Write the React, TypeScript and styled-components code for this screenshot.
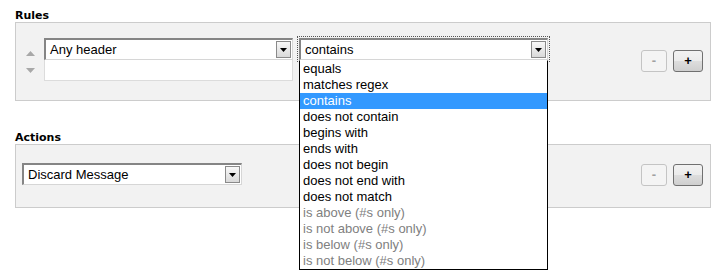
import * as React from 'react';
import styled, { createGlobalStyle } from 'styled-components';

const GlobalStyle = createGlobalStyle`
  body {
    margin: 0;
    background: #ffffff;
    font-family: "Liberation Sans", Arial, sans-serif;
  }
`;

const operators = [
  { label: 'equals' },
  { label: 'matches regex' },
  { label: 'contains', selected: true },
  { label: 'does not contain' },
  { label: 'begins with' },
  { label: 'ends with' },
  { label: 'does not begin' },
  { label: 'does not end with' },
  { label: 'does not match' },
  { label: 'is above (#s only)', disabled: true },
  { label: 'is not above (#s only)', disabled: true },
  { label: 'is below (#s only)', disabled: true },
  { label: 'is not below (#s only)', disabled: true },
];

const DropButton = () => (
  <Drop>
    <svg width="7" height="4" viewBox="0 0 7 4">
      <path d="M0 0h7L3.5 4z" fill="#000" />
    </svg>
  </Drop>
);

const Arrow: React.FC<{ down?: boolean }> = ({ down }) => (
  <svg width="9" height="5" viewBox="0 0 9 5">
    <path d={down ? 'M0 0h9L4.5 5z' : 'M4.5 0L9 5H0z'} fill="#a8a8a8" />
  </svg>
);

const App: React.FC = () => (
  <Page>
    <GlobalStyle />
    <Title>Rules</Title>
    <RulesPanel>
      <Arrows>
        <Arrow />
        <Arrow down />
      </Arrows>
      <Fields>
        <Select width={249}>
          <span>Any header</span>
          <DropButton />
        </Select>
        <TextInput />
      </Fields>
      <OperatorWrap>
        <Select width={249} focused>
          <span>contains</span>
          <DropButton />
        </Select>
        <List>
          {operators.map((op) => (
            <Option key={op.label} selected={op.selected} disabled={op.disabled}>
              {op.label}
            </Option>
          ))}
        </List>
      </OperatorWrap>
      <Buttons offset={12}>
        <SmallButton disabled>-</SmallButton>
        <SmallButton primary>+</SmallButton>
      </Buttons>
    </RulesPanel>

    <Title spaced>Actions</Title>
    <ActionsPanel>
      <Select width={220}>
        <span>Discard Message</span>
        <DropButton />
      </Select>
      <Buttons offset={1}>
        <SmallButton disabled>-</SmallButton>
        <SmallButton primary>+</SmallButton>
      </Buttons>
    </ActionsPanel>
  </Page>
);

export default App;

const Page = styled.div`
  padding: 9px 0 0 15px;
  width: 722px;
  height: 273px;
  box-sizing: border-box;
  overflow: hidden;
`;

const Title = styled.div<{ spaced?: boolean }>`
  font-family: "DejaVu Sans", Verdana, sans-serif;
  font-size: 11px;
  font-weight: bold;
  line-height: 13px;
  color: #000;
  margin-top: ${(p) => (p.spaced ? '30px' : '0')};
`;

const Panel = styled.div`
  width: 696px;
  box-sizing: border-box;
  border: 1px solid #cccccc;
  background: #f2f2f2;
  display: flex;
  align-items: flex-start;
`;

const RulesPanel = styled(Panel)`
  height: 79px;
  padding: 15px 7px 0 0;
`;

const ActionsPanel = styled(Panel)`
  height: 64px;
  padding: 18px 7px 0 6px;
`;

const Arrows = styled.div`
  width: 28px;
  display: flex;
  flex-direction: column;
  align-items: center;
  gap: 12px;
  padding-top: 13px;
`;

const Fields = styled.div`
  display: flex;
  flex-direction: column;
`;

const Select = styled.div<{ width: number; focused?: boolean }>`
  width: ${(p) => p.width}px;
  height: 22px;
  box-sizing: border-box;
  background: #fff;
  border-top: 2px solid #858585;
  border-left: 2px solid #858585;
  border-right: 1px solid #d6d6d6;
  border-bottom: 1px solid #d6d6d6;
  display: flex;
  align-items: center;
  justify-content: space-between;
  padding: 0 1px 0 4px;
  font-size: 13px;
  color: #000;
  outline: ${(p) => (p.focused ? '1px dotted #555' : 'none')};
  outline-offset: 1px;
`;

const Drop = styled.span`
  width: 15px;
  height: 17px;
  box-sizing: border-box;
  border: 1px solid #8a8a8a;
  background: linear-gradient(#f8f8f8, #d9d9d9);
  display: flex;
  align-items: center;
  justify-content: center;
`;

const TextInput = styled.div`
  width: 249px;
  height: 21px;
  box-sizing: border-box;
  background: #fff;
  border: 1px solid #dcdcdc;
  border-top: none;
`;

const OperatorWrap = styled.div`
  position: relative;
  margin-left: 6px;
`;

const List = styled.div`
  position: absolute;
  top: 22px;
  left: 0;
  width: 249px;
  box-sizing: border-box;
  background: #fff;
  border: 1px solid #000;
  border-top: 1px solid #fff;
  z-index: 2;
`;

const Option = styled.div<{ selected?: boolean; disabled?: boolean }>`
  height: 16px;
  line-height: 16px;
  padding-left: 3px;
  font-size: 13px;
  white-space: nowrap;
  background: ${(p) => (p.selected ? '#3399ff' : 'transparent')};
  color: ${(p) => (p.selected ? '#fff' : p.disabled ? '#808080' : '#000')};
`;

const Buttons = styled.div<{ offset: number }>`
  margin-left: auto;
  margin-top: ${(p) => p.offset}px;
  display: flex;
  gap: 6px;
`;

const SmallButton = styled.button<{ primary?: boolean }>`
  height: 22px;
  width: ${(p) => (p.primary ? '30px' : '26px')};
  padding: 0;
  border-radius: 3px;
  font-family: "Liberation Sans", Arial, sans-serif;
  font-size: 13px;
  font-weight: bold;
  line-height: 18px;
  border: 1px solid ${(p) => (p.primary ? '#707070' : '#c4c4c4')};
  color: ${(p) => (p.primary ? '#000' : '#a0a0a0')};
  background: ${(p) =>
    p.primary
      ? 'linear-gradient(#f2f2f2 0%, #ebebeb 50%, #dddddd 51%, #cfcfcf 100%)'
      : '#f4f4f4'};
`;
